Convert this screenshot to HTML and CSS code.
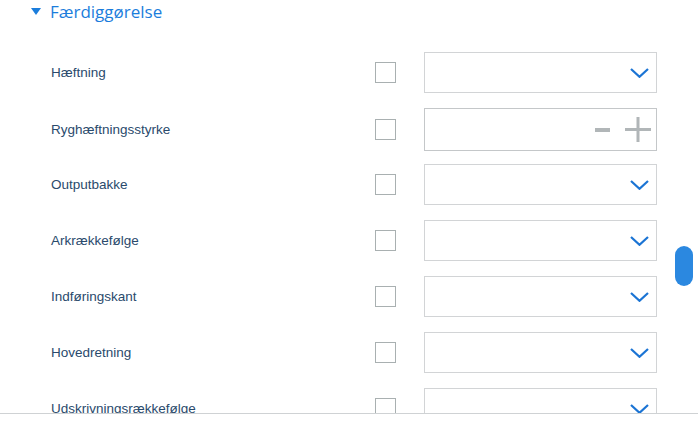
FILE: index.html
```html
<!DOCTYPE html>
<html>
<head>
<meta charset="utf-8">
<link rel="stylesheet" href="styles.css">
</head>
<body>
<div class="pane">
  <div class="section-head">
    <span class="tri"></span>
    <span class="section-title">Færdiggørelse</span>
  </div>
  <div class="rows">
    <div class="row">
      <span class="label">Hæftning</span>
      <span class="check"></span>
      <div class="select"><svg class="chev" width="19" height="10" viewBox="0 0 19 10"><polyline points="1,1 9.5,8.8 18,1" fill="none" stroke="#1b74d4" stroke-width="2.2"/></svg></div>
    </div>
    <div class="row">
      <span class="label">Ryghæftningsstyrke</span>
      <span class="check"></span>
      <div class="select num">
        <svg class="minus" width="15" height="4" viewBox="0 0 15 4"><rect x="0" y="0" width="15" height="4" fill="#b1b6b8"/></svg>
        <svg class="plus" width="26" height="25" viewBox="0 0 26 25"><rect x="0" y="11" width="26" height="3" fill="#b1b6b8"/><rect x="11.5" y="0" width="3" height="25" fill="#b1b6b8"/></svg>
      </div>
    </div>
    <div class="row">
      <span class="label">Outputbakke</span>
      <span class="check"></span>
      <div class="select"><svg class="chev" width="19" height="10" viewBox="0 0 19 10"><polyline points="1,1 9.5,8.8 18,1" fill="none" stroke="#1b74d4" stroke-width="2.2"/></svg></div>
    </div>
    <div class="row">
      <span class="label">Arkrækkefølge</span>
      <span class="check"></span>
      <div class="select"><svg class="chev" width="19" height="10" viewBox="0 0 19 10"><polyline points="1,1 9.5,8.8 18,1" fill="none" stroke="#1b74d4" stroke-width="2.2"/></svg></div>
    </div>
    <div class="row">
      <span class="label">Indføringskant</span>
      <span class="check"></span>
      <div class="select"><svg class="chev" width="19" height="10" viewBox="0 0 19 10"><polyline points="1,1 9.5,8.8 18,1" fill="none" stroke="#1b74d4" stroke-width="2.2"/></svg></div>
    </div>
    <div class="row">
      <span class="label">Hovedretning</span>
      <span class="check"></span>
      <div class="select"><svg class="chev" width="19" height="10" viewBox="0 0 19 10"><polyline points="1,1 9.5,8.8 18,1" fill="none" stroke="#1b74d4" stroke-width="2.2"/></svg></div>
    </div>
    <div class="row">
      <span class="label">Udskrivningsrækkefølge</span>
      <span class="check"></span>
      <div class="select"><svg class="chev" width="19" height="10" viewBox="0 0 19 10"><polyline points="1,1 9.5,8.8 18,1" fill="none" stroke="#1b74d4" stroke-width="2.2"/></svg></div>
    </div>
  </div>
  <div class="thumb"></div>
</div>
</body>
</html>
```
FILE: styles.css
```css
html, body {
  margin: 0;
  padding: 0;
  background: #fff;
}
.pane {
  position: relative;
  height: 413px;
  overflow: hidden;
  border-bottom: 1px solid #cfd2d4;
}
.section-head {
  display: flex;
  align-items: center;
  height: 24px;
  padding-left: 31px;
}
.tri {
  width: 0;
  height: 0;
  border-left: 5px solid transparent;
  border-right: 5px solid transparent;
  border-top: 7px solid #1b7ddc;
  margin-right: 9px;
  margin-top: -1px;
}
.section-title {
  font-family: "Open Sans", sans-serif;
  font-size: 17px;
  color: #1b7ddc;
  line-height: 24px;
}
.rows {
  display: flex;
  flex-direction: column;
  gap: 15px;
  padding-top: 28px;
  padding-left: 51px;
}
.row {
  display: grid;
  grid-template-columns: 296px 21px 233px;
  column-gap: 28px;
  align-items: center;
  height: 41px;
}
.label {
  font-family: "Liberation Sans", Arial, sans-serif;
  font-size: 13.5px;
  color: #2a4a6c;
}
.check {
  box-sizing: border-box;
  width: 21px;
  height: 21px;
  border: 1px solid #a9b0b1;
  background: #fff;
}
.select {
  box-sizing: border-box;
  height: 41px;
  border: 1px solid #d2d4d6;
  display: flex;
  align-items: center;
  justify-content: flex-end;
  padding-right: 7px;
}
.select.num {
  height: 43px;
  border-color: #c4c7c9;
  padding-right: 5px;
}
.minus {
  margin-right: 15px;
}
.thumb {
  position: absolute;
  left: 675px;
  top: 246px;
  width: 18px;
  height: 40px;
  border-radius: 9px;
  background: #2b88e0;
}
```
